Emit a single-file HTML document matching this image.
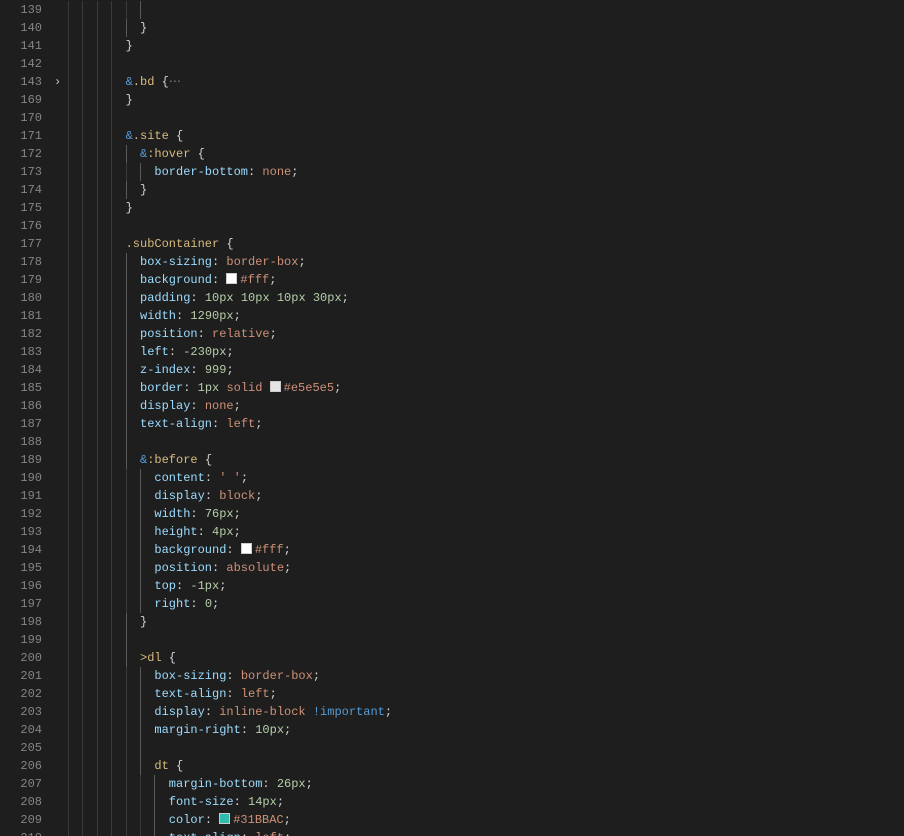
<!DOCTYPE html>
<html><head><meta charset="utf-8"><style>
html,body{margin:0;padding:0;background:#1e1e1e;width:904px;height:836px;overflow:hidden}
.ed{position:relative;padding-top:1px;font-family:"Liberation Mono",monospace;font-size:12px;}
.l{position:relative;height:18px;line-height:18px;white-space:pre;color:#d4d4d4}
.n{position:absolute;left:0;width:42px;text-align:right;color:#858585}
.c{position:absolute;top:0}
.g{position:absolute;top:0;width:1px;height:18px;background:#3a3a3a}
.p{color:#9cdcfe}.v{color:#ce9178}.u{color:#b5cea8}.s{color:#d7ba7d}.k{color:#569cd6}
.sw{display:inline-block;width:9px;height:9px;border:1px solid #ccc;margin-right:3px;vertical-align:-1px}
.chev{position:absolute;left:54px;top:0;color:#c5c5c5}
</style></head><body><div class="ed" id="ed">
</div>
<script>
var L=[
[139,6,''],
[140,5,'}'],
[141,4,'}'],
[142,4,''],
[143,4,'<span class="k">&amp;</span><span class="s">.bd</span> {<span style="color:#858585">⋯</span>',1],
[169,4,'}'],
[170,4,''],
[171,4,'<span class="k">&amp;</span><span class="s">.site</span> {'],
[172,5,'<span class="k">&amp;</span><span class="s">:hover</span> {'],
[173,6,'<span class="p">border-bottom</span>: <span class="v">none</span>;'],
[174,5,'}'],
[175,4,'}'],
[176,4,''],
[177,4,'<span class="s">.subContainer</span> {'],
[178,5,'<span class="p">box-sizing</span>: <span class="v">border-box</span>;'],
[179,5,'<span class="p">background</span>: <span class="sw" style="background:#fff"></span><span class="v">#fff</span>;'],
[180,5,'<span class="p">padding</span>: <span class="u">10px 10px 10px 30px</span>;'],
[181,5,'<span class="p">width</span>: <span class="u">1290px</span>;'],
[182,5,'<span class="p">position</span>: <span class="v">relative</span>;'],
[183,5,'<span class="p">left</span>: <span class="u">-230px</span>;'],
[184,5,'<span class="p">z-index</span>: <span class="u">999</span>;'],
[185,5,'<span class="p">border</span>: <span class="u">1px</span> <span class="v">solid</span> <span class="sw" style="background:#e5e5e5"></span><span class="v">#e5e5e5</span>;'],
[186,5,'<span class="p">display</span>: <span class="v">none</span>;'],
[187,5,'<span class="p">text-align</span>: <span class="v">left</span>;'],
[188,5,''],
[189,5,'<span class="k">&amp;</span><span class="s">:before</span> {'],
[190,6,'<span class="p">content</span>: <span class="v">\' \'</span>;'],
[191,6,'<span class="p">display</span>: <span class="v">block</span>;'],
[192,6,'<span class="p">width</span>: <span class="u">76px</span>;'],
[193,6,'<span class="p">height</span>: <span class="u">4px</span>;'],
[194,6,'<span class="p">background</span>: <span class="sw" style="background:#fff"></span><span class="v">#fff</span>;'],
[195,6,'<span class="p">position</span>: <span class="v">absolute</span>;'],
[196,6,'<span class="p">top</span>: <span class="u">-1px</span>;'],
[197,6,'<span class="p">right</span>: <span class="u">0</span>;'],
[198,5,'}'],
[199,5,''],
[200,5,'<span class="s">&gt;dl</span> {'],
[201,6,'<span class="p">box-sizing</span>: <span class="v">border-box</span>;'],
[202,6,'<span class="p">text-align</span>: <span class="v">left</span>;'],
[203,6,'<span class="p">display</span>: <span class="v">inline-block</span> <span class="k">!important</span>;'],
[204,6,'<span class="p">margin-right</span>: <span class="u">10px</span>;'],
[205,6,''],
[206,6,'<span class="s">dt</span> {'],
[207,7,'<span class="p">margin-bottom</span>: <span class="u">26px</span>;'],
[208,7,'<span class="p">font-size</span>: <span class="u">14px</span>;'],
[209,7,'<span class="p">color</span>: <span class="sw" style="background:#31BBAC"></span><span class="v">#31BBAC</span>;'],
[210,7,'<span class="p">text-align</span>: <span class="v">left</span>;']
];
var h='';
L.forEach(function(r){
 var s='<div class="l"><span class="n">'+r[0]+'</span>';
 if(r[3])s+='<span class="chev">›</span>';
 for(var i=0;i<r[1];i++){s+='<span class="g" style="left:'+(68+i*14.4).toFixed(1)+'px'+(i==r[1]-1&&i>=4?';background:#5a5a5a':'')+'"></span>';}
 s+='<span class="c" style="left:'+(68+r[1]*14.4).toFixed(1)+'px">'+r[2]+'</span></div>';
 h+=s;
});
document.getElementById('ed').innerHTML=h;
</script>
</body></html>
